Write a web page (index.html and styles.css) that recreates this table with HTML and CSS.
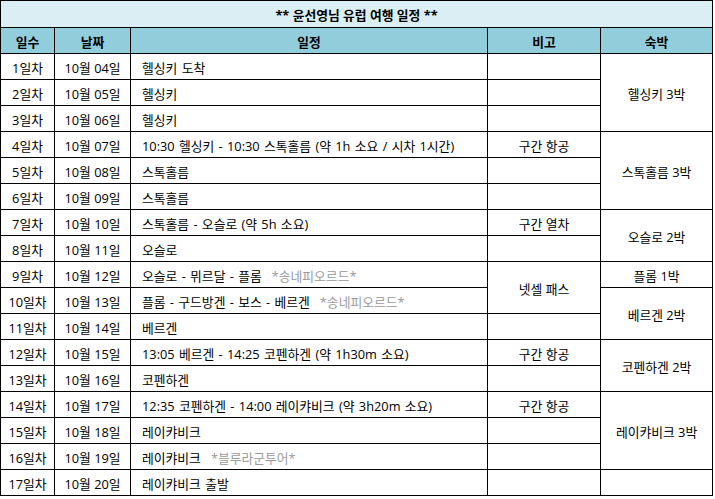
FILE: index.html
```html
<!DOCTYPE html>
<html lang="ko">
<head>
<meta charset="utf-8">
<title>윤선영님 유럽 여행 일정</title>
<link rel="stylesheet" href="styles.css">
</head>
<body>
<table class="plan">
  <colgroup>
    <col class="c-day">
    <col class="c-date">
    <col class="c-plan">
    <col class="c-note">
    <col class="c-stay">
  </colgroup>
  <tr class="title-row"><td colspan="5" class="title">** 윤선영님 유럽 여행 일정 **</td></tr>
  <tr class="head-row">
    <th>일수</th><th>날짜</th><th>일정</th><th>비고</th><th>숙박</th>
  </tr>
  <tr><td class="ctr">1일차</td><td class="ctr">10월 04일</td><td class="txt">헬싱키 도착</td><td></td><td class="ctr" rowspan="3">헬싱키 3박</td></tr>
  <tr><td class="ctr">2일차</td><td class="ctr">10월 05일</td><td class="txt">헬싱키</td><td></td></tr>
  <tr><td class="ctr">3일차</td><td class="ctr">10월 06일</td><td class="txt">헬싱키</td><td></td></tr>
  <tr><td class="ctr">4일차</td><td class="ctr">10월 07일</td><td class="txt">10:30 헬싱키 - 10:30 스톡홀름 (약 1h 소요 / 시차 1시간)</td><td class="ctr">구간 항공</td><td class="ctr" rowspan="3">스톡홀름 3박</td></tr>
  <tr><td class="ctr">5일차</td><td class="ctr">10월 08일</td><td class="txt">스톡홀름</td><td></td></tr>
  <tr><td class="ctr">6일차</td><td class="ctr">10월 09일</td><td class="txt">스톡홀름</td><td></td></tr>
  <tr><td class="ctr">7일차</td><td class="ctr">10월 10일</td><td class="txt">스톡홀름 - 오슬로 (약 5h 소요)</td><td class="ctr">구간 열차</td><td class="ctr" rowspan="2">오슬로 2박</td></tr>
  <tr><td class="ctr">8일차</td><td class="ctr">10월 11일</td><td class="txt">오슬로</td><td></td></tr>
  <tr><td class="ctr">9일차</td><td class="ctr">10월 12일</td><td class="txt">오슬로 - 뮈르달 - 플롬<span class="memo">*송네피오르드*</span></td><td class="ctr" rowspan="2">넷셀 패스</td><td class="ctr">플롬 1박</td></tr>
  <tr><td class="ctr">10일차</td><td class="ctr">10월 13일</td><td class="txt">플롬 - 구드방겐 - 보스 - 베르겐<span class="memo">*송네피오르드*</span></td><td class="ctr" rowspan="2">베르겐 2박</td></tr>
  <tr><td class="ctr">11일차</td><td class="ctr">10월 14일</td><td class="txt">베르겐</td><td></td></tr>
  <tr><td class="ctr">12일차</td><td class="ctr">10월 15일</td><td class="txt">13:05 베르겐 - 14:25 코펜하겐 (약 1h30m 소요)</td><td class="ctr">구간 항공</td><td class="ctr" rowspan="2">코펜하겐 2박</td></tr>
  <tr><td class="ctr">13일차</td><td class="ctr">10월 16일</td><td class="txt">코펜하겐</td><td></td></tr>
  <tr><td class="ctr">14일차</td><td class="ctr">10월 17일</td><td class="txt">12:35 코펜하겐 - 14:00 레이캬비크 (약 3h20m 소요)</td><td class="ctr">구간 항공</td><td class="ctr" rowspan="3">레이캬비크 3박</td></tr>
  <tr><td class="ctr">15일차</td><td class="ctr">10월 18일</td><td class="txt">레이캬비크</td><td></td></tr>
  <tr><td class="ctr">16일차</td><td class="ctr">10월 19일</td><td class="txt">레이캬비크<span class="memo">*블루라군투어*</span></td><td></td></tr>
  <tr><td class="ctr">17일차</td><td class="ctr">10월 20일</td><td class="txt">레이캬비크 출발</td><td></td><td></td></tr>
</table>
</body>
</html>
```

FILE: styles.css
```css
html, body {
  margin: 0;
  padding: 0;
  background: #ffffff;
}

.plan {
  border-collapse: separate;
  border-spacing: 0;
  table-layout: fixed;
  width: 713px;
  border-top: 1px solid #000;
  border-left: 1px solid #000;
  font-family: "Open Sans", "Noto Sans CJK KR", sans-serif;
  font-size: 12.8px;
  color: #000;
}

.c-day { width: 54px; }
.c-date { width: 76px; }
.c-plan { width: 357px; }
.c-note { width: 113px; }
.c-stay { width: 112px; }

.plan td,
.plan th {
  box-sizing: border-box;
  height: 26px;
  padding: 2px 0 0 0;
  border-right: 1px solid #000;
  border-bottom: 1px solid #000;
  vertical-align: middle;
  line-height: 16px;
  white-space: nowrap;
  overflow: hidden;
}

.title-row .title {
  height: 27px;
  background: #daeef3;
  text-align: center;
  font-weight: bold;
}

.head-row th {
  background: #92cddc;
  text-align: center;
  font-weight: bold;
}

.plan .ctr {
  text-align: center;
}

.plan .txt {
  text-align: left;
  padding-left: 11px;
  word-spacing: 1px;
}

.memo {
  color: #9a9a9a;
  margin-left: 10px;
}
```
